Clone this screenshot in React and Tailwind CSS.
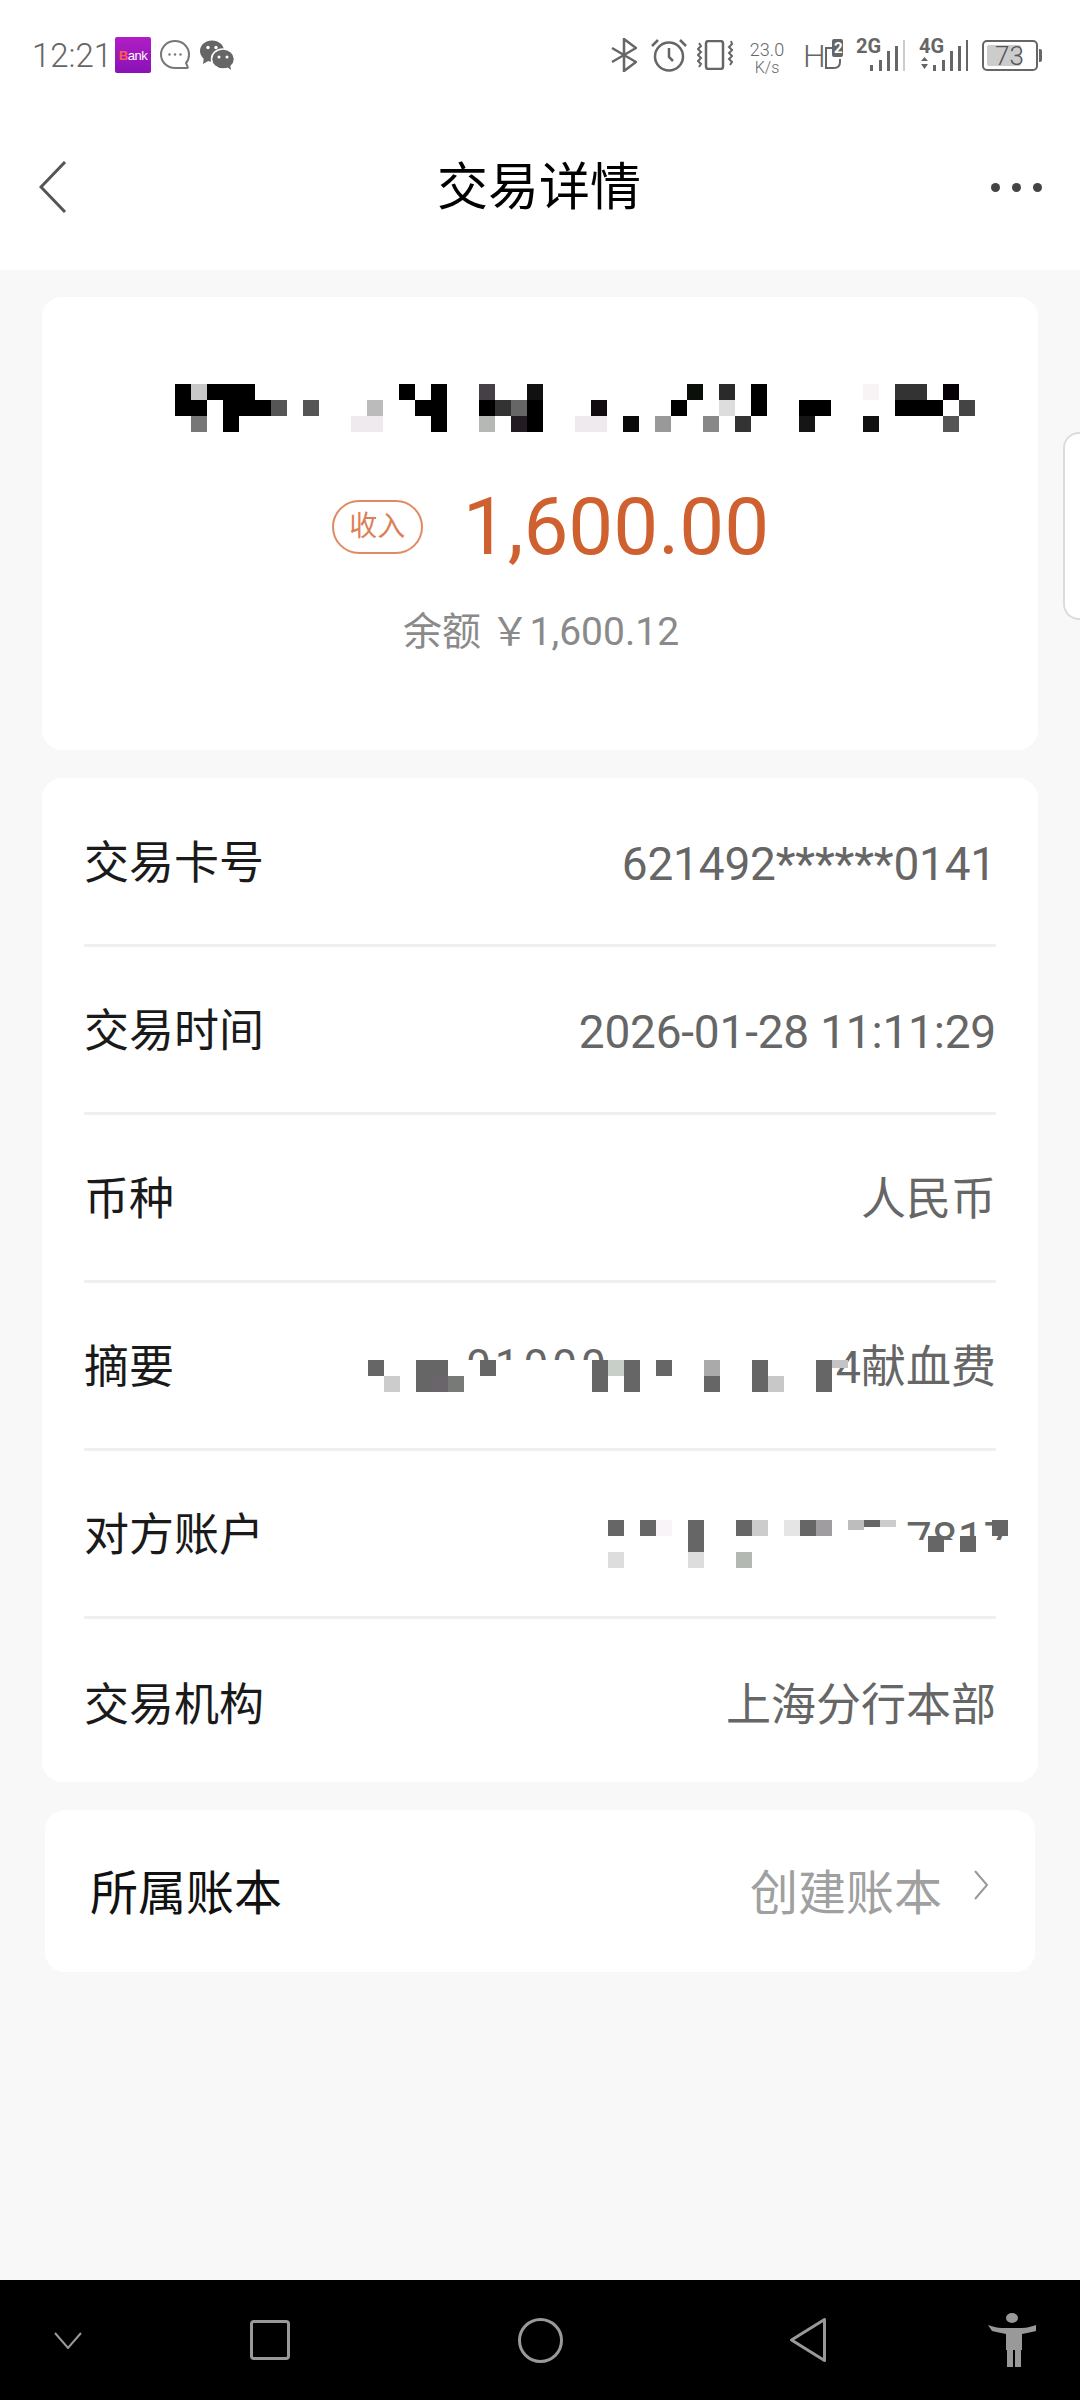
const FONT = "font-['Roboto','Noto_Sans_CJK_SC',sans-serif]"

// mosaic cells: [row, col, colour, height?]
const NAME_CELLS = [
  [0, 0, '#000'], [0, 1, '#c8c8c8'], [0, 2, '#000'], [0, 3, '#000'], [0, 4, '#000'], [0, 14, '#000'], [0, 16, '#000'],
  [0, 19, '#444046'], [0, 22, '#111'], [0, 32, '#0a0f0a'], [0, 34, '#2a2a2a'], [0, 36, '#000'], [0, 43, '#f8f4f6'],
  [0, 45, '#333'], [0, 46, '#333'], [0, 48, '#050005'],
  [1, 0, '#000'], [1, 1, '#000'], [1, 3, '#000'], [1, 4, '#000'], [1, 5, '#000'], [1, 6, '#555'], [1, 8, '#555'],
  [1, 12, '#bbb'], [1, 15, '#000'], [1, 16, '#000'], [1, 19, '#000'], [1, 20, '#333'], [1, 21, '#666'], [1, 22, '#000'],
  [1, 26, '#110a0f'], [1, 31, '#000'], [1, 34, '#ddd'], [1, 36, '#000'], [1, 39, '#000'], [1, 40, '#000'],
  [1, 45, '#000'], [1, 46, '#000'], [1, 47, '#000'], [1, 49, '#444'],
  [2, 1, '#777'], [2, 3, '#000'], [2, 11, '#eeeaee'], [2, 12, '#eeeaee'], [2, 16, '#000'], [2, 19, '#b5b8b5'],
  [2, 21, '#221c22'], [2, 22, '#000'], [2, 25, '#eeeaee'], [2, 26, '#eeeaee'], [2, 28, '#0a0a0a'], [2, 30, '#999'],
  [2, 33, '#888'], [2, 35, '#333'], [2, 39, '#151515'], [2, 43, '#111'], [2, 48, '#555'],
]

const MEMO_CELLS = [
  [0, 0, '#666'], [0, 3, '#666'], [0, 4, '#666'], [0, 7, '#666'], [0, 14, '#666'], [0, 15, '#c8cec8'], [0, 16, '#666'],
  [0, 18, '#666'], [0, 21, '#aaa'], [0, 24, '#666'], [0, 28, '#666'], [0, 29, '#c4c4c4', 8],
  [1, 1, '#ccc'], [1, 3, '#666'], [1, 4, '#6a656a'], [1, 5, '#777a77'], [1, 14, '#666'], [1, 16, '#666'], [1, 21, '#666'],
  [1, 24, '#666'], [1, 25, '#c8c8c8'], [1, 28, '#666'],
]

const ACCOUNT_CELLS = [
  [0, 0, '#666'], [0, 2, '#666'], [0, 3, '#f8f4f8'], [0, 5, '#666'], [0, 8, '#666'], [0, 9, '#ccc'], [0, 11, '#e5e5e5'],
  [0, 12, '#666'], [0, 13, '#a09da0'], [0, 15, '#bdbdbd', 10], [0, 16, '#666', 7], [0, 17, '#ccc', 7], [0, 24, '#666'],
  [1, 5, '#666'], [1, 20, '#666'], [1, 22, '#666'],
  [2, 0, '#ddd'], [2, 5, '#ddd'], [2, 8, '#b3b8b3'],
]

function Mosaic({ cells, cols, rows, className }) {
  return (
    <svg width={cols * 16} height={rows * 16} className={className}>
      {cells.map(([r, c, fill, h]) => (
        <rect key={`${r}-${c}`} x={c * 16} y={r * 16} width="16" height={h || 16} fill={fill} />
      ))}
    </svg>
  )
}

function Signal({ label, arrows, divider }) {
  return (
    <div className="relative w-[49px] h-[34px] text-[#666]">
      <span className="absolute left-0 -top-[2px] text-[20px] leading-[20px] font-bold font-['Roboto',sans-serif]">{label}</span>
      <svg width="49" height="34" className="absolute left-0 top-0">
        {arrows && <path d="M2 23l3.500-4 3.500 4zM2 26l3.500 5 3.500-5z" fill="#666" />}
        <rect x="14" y="27" width="3" height="6" fill="#666" />
        <rect x="23" y="22" width="3" height="11" fill="#666" />
        <rect x="31" y="13" width="3" height="20" fill="#666" />
        <rect x="39" y="8" width="3" height="25" fill="#666" />
        <rect x="47" y="2" width="2.500" height="31" fill={divider ? '#ccc' : '#666'} />
      </svg>
    </div>
  )
}

function StatusBar() {
  return (
    <div className="h-[110px] bg-white flex items-center pl-[32px] text-[#666]">
      <span className="text-[33px] leading-none font-light font-['Roboto',sans-serif] w-[83px]">12:21</span>
      <div className="w-[36px] h-[36px] rounded-[2px] bg-gradient-to-b from-[#b01ec4] to-[#8a10b8] flex items-center justify-center">
        <span className="text-[13px] leading-none font-medium text-white font-['Liberation_Sans',sans-serif] tracking-[-0.5px]">
          <span className="text-[#ff5a4a] font-bold">B</span>ank
        </span>
      </div>
      {/* message bubble */}
      <svg width="32" height="32" viewBox="0 0 32 32" className="ml-[8px]" fill="none" stroke="#777" strokeWidth="2">
        <path d="M16 2C8 2 2 8 2 15.500S8 29 16 29h12c1 0 1-1 .5-1.500l-1.500-3.500c2-2.200 3-5 3-8.500C30 8 24 2 16 2z" />
        <circle cx="10.500" cy="15.500" r="1.200" fill="#777" stroke="none" />
        <circle cx="16" cy="15.500" r="1.200" fill="#777" stroke="none" />
        <circle cx="21.500" cy="15.500" r="1.200" fill="#777" stroke="none" />
      </svg>
      {/* wechat */}
      <svg width="34" height="30" viewBox="0 0 34 30" className="ml-[9px]">
        <ellipse cx="12" cy="11" rx="12" ry="10.500" fill="#666" />
        <path d="M4 17l-1 7 7-4z" fill="#666" />
        <ellipse cx="23" cy="19" rx="11.500" ry="10" fill="#666" stroke="#fff" strokeWidth="1.500" />
        <path d="M27 27l4 3-1-6z" fill="#666" />
        <circle cx="8" cy="7.500" r="1.700" fill="#fff" />
        <circle cx="16" cy="7.500" r="1.700" fill="#fff" />
        <circle cx="19" cy="17" r="1.500" fill="#fff" />
        <circle cx="27" cy="17" r="1.500" fill="#fff" />
      </svg>

      <div className="ml-auto flex items-center pr-[38px]">
        {/* bluetooth */}
        <svg width="26" height="34" viewBox="0 0 26 34" fill="none" stroke="#666" strokeWidth="2.500">
          <path d="M1 10l24 14-12 9V1l12 9L1 24" />
        </svg>
        {/* alarm */}
        <svg width="36" height="34" viewBox="0 0 36 34" className="ml-[14px]" fill="none" stroke="#666" strokeWidth="2.500">
          <circle cx="18" cy="18.500" r="14" />
          <path d="M18 10v9l4 4M1 8l6-6M35 8l-6-6" />
        </svg>
        {/* vibrate */}
        <svg width="36" height="30" viewBox="0 0 36 30" className="ml-[10px]" fill="none" stroke="#666" strokeWidth="2">
          <rect x="9" y="1" width="17" height="28" rx="2.500" strokeWidth="2.500" />
          <path d="M2 3l2 3-3 3 3 3-3 3 3 3-3 3 3 3-2 3M34 1l1 3-3 3 3 3-3 3 3 3-3 3 3 3-2 3" />
        </svg>
        <div className="ml-[14px] w-[40px] flex flex-col items-center font-['Roboto',sans-serif] font-light text-[18px] leading-[20px] mt-[6px]">
          <span>23.0</span>
          <span className="text-[16px] leading-[16px]">K/s</span>
        </div>
        {/* HD 2 */}
        <div className="relative w-[40px] h-[32px] ml-[16px] mr-[2px]">
          <span className="absolute left-0 top-[2px] text-[32px] leading-[30px] font-light font-['Roboto',sans-serif]">H</span>
          <svg width="40" height="32" className="absolute left-0 top-0" fill="none" stroke="#666" strokeWidth="2">
            <path d="M29 9h-6v20h8c4 0 6-2 6-6v-3" />
            <rect x="29" y="0" width="11" height="18" rx="2" fill="#666" stroke="none" />
          </svg>
          <span className="absolute left-[31px] top-[0px] text-[15px] leading-[18px] font-bold text-white font-['Roboto',sans-serif]">2</span>
        </div>
        <div className="ml-[11px]"><Signal label="2G" divider /></div>
        <div className="ml-[14px]"><Signal label="4G" arrows /></div>
        {/* battery */}
        <div className="ml-[14px] relative w-[60px] h-[31px]">
          <div className="absolute left-0 top-0 w-[56px] h-[31px] rounded-[5px] border-[2.500px] border-[#666] p-[3px]">
            <div className="w-[34px] h-full rounded-[2px] bg-[#ccc]" />
          </div>
          <div className="absolute right-0 top-[9px] w-[3px] h-[13px] bg-[#666] rounded-r-[2px]" />
          <span className="absolute left-[13px] top-[3px] text-[26px] leading-[26px] font-light text-[#555] font-['Roboto',sans-serif]">73</span>
        </div>
      </div>
    </div>
  )
}

function Header() {
  return (
    <div className="h-[160px] bg-white flex items-center justify-between pl-[39px] pr-[38px] pb-[6px]">
      <svg width="28" height="52" viewBox="0 0 28 52" fill="none" stroke="#555" strokeWidth="3">
        <path d="M26 1L2 26l24 25" />
      </svg>
      <h1 className={`${FONT} text-[51px] leading-none text-black ml-[20px]`}>交易详情</h1>
      <div className="flex items-center gap-[12px]">
        <span className="w-[9px] h-[9px] rounded-full bg-[#444]" />
        <span className="w-[9px] h-[9px] rounded-full bg-[#444]" />
        <span className="w-[9px] h-[9px] rounded-full bg-[#444]" />
      </div>
    </div>
  )
}

function AmountCard() {
  return (
    <div className={`${FONT} mx-[42px] mt-[27px] h-[453px] bg-white rounded-[20px] flex flex-col items-center`}>
      <Mosaic cells={NAME_CELLS} cols={50} rows={3} className="mt-[87px] ml-[69px] shrink-0" />
      <div className="mt-[47px] ml-[21px] flex items-center">
        <span className="w-[91px] h-[54px] rounded-full border-2 border-[#e08a63] text-[#dd7f55] text-[28px] leading-none flex items-center justify-center">收入</span>
        <span className="ml-[40px] text-[80px] leading-[96px] text-[#cf6030] font-['Roboto',sans-serif]">1,600.00</span>
      </div>
      <div className="mt-[35px] ml-[2px] text-[39px] leading-[44px] text-[#8a8a8a]">余额 ￥1,600.12</div>
    </div>
  )
}

function Row({ label, last, children }) {
  return (
    <div className={`h-[168px] mx-[42px] shrink-0 flex items-center justify-between pt-[4px] ${last ? '' : 'border-b-[3px] border-[#efefef]'}`}>
      <span className="text-[45px] leading-none text-[#1a1a1a]">{label}</span>
      {children}
    </div>
  )
}

function Value({ wide, children }) {
  return <span className={`${wide ? 'text-[46px] tracking-[-0.2px]' : 'text-[45px]'} leading-none text-[#666]`}>{children}</span>
}

function DetailCard() {
  return (
    <div className={`${FONT} relative mx-[42px] mt-[28px] h-[1004px] pt-[1px] bg-white rounded-[20px] flex flex-col overflow-visible`}>
      <Row label="交易卡号"><Value wide>621492******0141</Value></Row>
      <Row label="交易时间"><Value wide>2026-01-28 11:11:29</Value></Row>
      <Row label="币种"><Value>人民币</Value></Row>
      <Row label="摘要"><Value>4献血费</Value></Row>
      <Row label="对方账户" />
      <Row label="交易机构" last><Value>上海分行本部</Value></Row>

      {/* masked memo */}
      <div className="absolute left-[424px] top-[570px] w-[160px] h-[12px] overflow-hidden text-[44px] leading-[52px] text-[#666] tracking-[4px]">
        <div className="-mt-[8px]">01000</div>
      </div>
      <Mosaic cells={MEMO_CELLS} cols={30} rows={2} className="absolute left-[326px] top-[582px]" />

      {/* masked account */}
      <div className="absolute left-[864px] top-[742px] w-[104px] h-[20px] overflow-hidden text-[46px] leading-[52px] text-[#666]">
        <div className="-mt-[7px]">7817</div>
      </div>
      <Mosaic cells={ACCOUNT_CELLS} cols={25} rows={3} className="absolute left-[566px] top-[742px]" />
    </div>
  )
}

function BookCard() {
  return (
    <div className={`${FONT} mx-[45px] mt-[28px] h-[162px] bg-white rounded-[20px] flex items-center pl-[45px] pr-[46px] pt-[5px]`}>
      <span className="text-[48px] leading-none text-[#111]">所属账本</span>
      <span className="ml-auto text-[48px] leading-none text-[#a0a0a0]">创建账本</span>
      <svg width="16" height="30" viewBox="0 0 16 30" className="ml-[31px] -mt-[17px]" fill="none" stroke="#999" strokeWidth="2">
        <path d="M2 1l12 14L2 29" />
      </svg>
    </div>
  )
}

function NavBar() {
  return (
    <div className="h-[120px] bg-black flex items-center pl-[44px] shrink-0">
      <div className="w-[48px] flex justify-center">
        <svg width="30" height="17" viewBox="0 0 30 17" fill="none" stroke="#999" strokeWidth="2">
          <path d="M2 1l13 15L28 1" />
        </svg>
      </div>
      <div className="w-[48px] flex justify-center ml-[154px]">
        <div className="w-[40px] h-[40px] rounded-[4px] border-[3px] border-[#999]" />
      </div>
      <div className="w-[48px] flex justify-center ml-[222px]">
        <div className="w-[45px] h-[45px] rounded-full border-[3px] border-[#999]" />
      </div>
      <div className="w-[48px] flex justify-center ml-[220px]">
        <svg width="38" height="46" viewBox="0 0 38 46" fill="none" stroke="#999" strokeWidth="3" strokeLinejoin="round">
          <path d="M35.500 2.500v41L2.500 23z" />
        </svg>
      </div>
      <div className="w-[48px] flex justify-center ml-[156px]">
        <svg width="48" height="54" viewBox="0 0 48 54" fill="#999">
          <ellipse cx="24" cy="5" rx="6" ry="5" />
          <path d="M0 12c4 1 9 3 14 3h20c5 0 10-2 14-3v6c-4 1-9 2-14 3v16h-1v17h-6V37h-2v17h-6V37h-1V21c-5-1-10-2-14-3z" />
        </svg>
      </div>
    </div>
  )
}

export default function App() {
  return (
    <div className="relative w-[1080px] h-[2400px] bg-[#f8f8f8] flex flex-col overflow-hidden">
      <StatusBar />
      <Header />
      <div className="flex-1">
        <AmountCard />
        <DetailCard />
        <BookCard />
      </div>
      <NavBar />
      {/* floating side handle */}
      <div className="absolute right-0 top-[432px] w-[17px] h-[188px] rounded-l-[16px] border-2 border-r-0 border-[#dcdcdc] bg-white" />
    </div>
  )
}
